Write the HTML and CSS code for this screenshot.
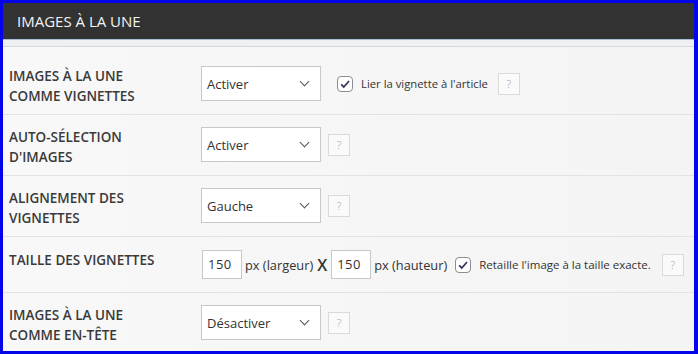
FILE: index.html
```html
<!DOCTYPE html>
<html lang="fr">
<head>
    <meta charset="UTF-8">
    <meta name="viewport" content="width=device-width, initial-scale=1.0">
    <title>Images à la une</title>
    <link rel="stylesheet" href="styles.css">
</head>
<body>
    <div class="frame">
        <div class="panel-head">IMAGES À LA UNE</div>
        <div class="panel-sub"></div>

        <div class="options">
            <div class="row first">
                <div class="label">IMAGES À LA UNE<br>COMME VIGNETTES</div>
                <div class="controls">
                    <div class="select">Activer<span class="chev"></span></div>
                    <label class="check wide">
                        <span class="box"><svg viewBox="0 0 16 16"><path d="M3.6 8.4 L6.6 11.4 L12.6 4.6" /></svg></span>
                        Lier la vignette à l'article
                    </label>
                    <span class="help">?</span>
                </div>
            </div>

            <div class="row">
                <div class="label">AUTO-SÉLECTION<br>D'IMAGES</div>
                <div class="controls">
                    <div class="select">Activer<span class="chev"></span></div>
                    <span class="help">?</span>
                </div>
            </div>

            <div class="row">
                <div class="label">ALIGNEMENT DES<br>VIGNETTES</div>
                <div class="controls">
                    <div class="select">Gauche<span class="chev"></span></div>
                    <span class="help">?</span>
                </div>
            </div>

            <div class="row size">
                <div class="label">TAILLE DES VIGNETTES</div>
                <div class="controls">
                    <span class="num">150</span>
                    <span class="unit">px (largeur)</span>
                    <span class="times">X</span>
                    <span class="num">150</span>
                    <span class="unit">px (hauteur)</span>
                    <label class="check small">
                        <span class="box"><svg viewBox="0 0 16 16"><path d="M3.6 8.4 L6.6 11.4 L12.6 4.6" /></svg></span>
                        Retaille l'image à la taille exacte.
                    </label>
                    <span class="help">?</span>
                </div>
            </div>

            <div class="row last">
                <div class="label">IMAGES À LA UNE<br>COMME EN-TÊTE</div>
                <div class="controls">
                    <div class="select">Désactiver<span class="chev"></span></div>
                    <span class="help">?</span>
                </div>
            </div>
        </div>
    </div>
</body>
</html>
```

FILE: styles.css
```css
html, body {
    margin: 0;
    height: 100%;
}

body {
    font-family: "Open Sans", Arial, sans-serif;
    color: #333;
    background-color: #0000ee;
}

.frame {
    box-sizing: border-box;
    height: 354px;
    border-style: solid;
    border-color: #0404e8;
    border-width: 3px 4px 3px 3px;
    background-color: #f5f5f5;
    overflow: hidden;
}

.panel-head {
    height: 36px;
    line-height: 36px;
    padding-left: 14px;
    background-color: #323232;
    color: #f2f2f2;
    font-size: 15px;
    border-bottom: 1px solid #a9bcd6;
}

.panel-sub {
    height: 6px;
    background-color: #eef0f2;
    border-bottom: 1px solid #d8d8d8;
}

.options {
    padding-top: 6px;
    background: linear-gradient(to right, #f8f8f8, #f4f4f4);
}

.row {
    display: flex;
    align-items: flex-start;
    padding: 12px 0 13px 6px;
    border-bottom: 1px solid #e3e3e3;
}

.row.first {
    padding-top: 13px;
}

.row.size {
    padding-top: 13px;
}

.row.last {
    border-bottom: none;
}

.label {
    width: 192px;
    height: 29px;
    flex-shrink: 0;
    font-size: 13.5px;
    font-weight: 600;
    line-height: 20px;
    color: #3a3a3a;
}

.controls {
    display: flex;
    align-items: center;
    font-size: 13px;
}

.select {
    box-sizing: border-box;
    width: 120px;
    height: 35px;
    border: 1px solid #c8c8c8;
    background-color: #fff;
    display: flex;
    align-items: center;
    justify-content: space-between;
    padding: 0 12px 0 5px;
    font-size: 13px;
    color: #333;
}

.chev {
    width: 6px;
    height: 6px;
    border-right: 1.5px solid #555;
    border-bottom: 1.5px solid #555;
    transform: rotate(45deg);
    margin-top: -4px;
}

.help {
    box-sizing: border-box;
    width: 22px;
    height: 22px;
    border: 1px solid #dadada;
    background-color: #fafafa;
    color: #9a9a9a;
    font-size: 11px;
    font-weight: 300;
    display: flex;
    align-items: center;
    justify-content: center;
    margin-left: 7px;
}

.check {
    display: flex;
    align-items: center;
    color: #333;
}

.check.wide {
    margin-left: 16px;
    margin-right: 3px;
    font-size: 11.3px;
}

.check.small {
    margin-left: 8px;
    margin-right: 4px;
    font-size: 11.5px;
}

.box {
    box-sizing: border-box;
    width: 16px;
    height: 16px;
    border: 1px solid #8c8c94;
    border-radius: 4px;
    background-color: #fff;
    margin-right: 8px;
    display: flex;
}

.box svg {
    width: 14px;
    height: 14px;
    fill: none;
    stroke: #3d2e5c;
    stroke-width: 2;
}

.num {
    box-sizing: border-box;
    width: 40px;
    height: 29px;
    border: 1px solid #c8c8c8;
    background-color: #fff;
    padding-left: 5px;
    line-height: 27px;
    font-size: 13px;
    letter-spacing: 0.5px;
}

.row.size .num:first-child {
    margin-left: 1px;
}

.unit {
    font-size: 12.8px;
    margin-left: 3px;
}

.times {
    font-size: 16px;
    font-weight: 600;
    margin: 0 4px 0 4px;
}
```
